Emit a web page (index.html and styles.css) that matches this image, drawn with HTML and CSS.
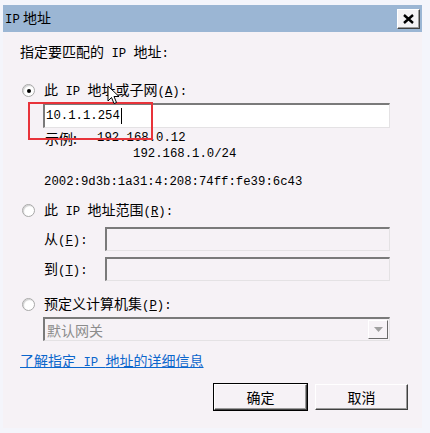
FILE: index.html
```html
<!DOCTYPE html>
<html lang="zh-CN">
<head>
  <meta charset="UTF-8">
  <title>IP 地址</title>
  <link rel="stylesheet" href="styles.css">
</head>
<body>
  <div class="window">
    <div class="titlebar">
      <span class="title"><span class="en">IP</span> 地址</span>
      <button class="close" aria-label="关闭">
        <svg width="11" height="10" viewBox="0 0 11 10"><path d="M1 1 L10 9 M10 1 L1 9" stroke="#000" stroke-width="2.4"/></svg>
      </button>
    </div>

    <div class="content">
      <div class="row heading"><span>指定要匹配的<span class="en"> IP </span>地址<span class="en">:</span></span></div>

      <div class="row option first">
        <span class="radio checked"></span>
        <span>此<span class="en"> IP </span>地址或子网<span class="en">(<u>A</u>):</span></span>
      </div>
      <div class="field-wrap">
        <div class="textbox">10.1.1.254<span class="caret"></span></div>
      </div>
      <div class="row example">
        <span class="ex-label">示例:</span>
        <span class="en">192.168.0.12</span>
      </div>
      <div class="row example second">
        <span class="en">192.168.1.0/24</span>
      </div>
      <div class="row ipv6">
        <span class="en">2002:9d3b:1a31:4:208:74ff:fe39:6c43</span>
      </div>

      <div class="row option range">
        <span class="radio"></span>
        <span>此<span class="en"> IP </span>地址范围<span class="en">(<u>R</u>):</span></span>
      </div>
      <div class="row pair from">
        <span class="pair-label">从<span class="en">(<u>F</u>):</span></span>
        <div class="textbox disabled"></div>
      </div>
      <div class="row pair to">
        <span class="pair-label">到<span class="en">(<u>T</u>):</span></span>
        <div class="textbox disabled"></div>
      </div>

      <div class="row option preset">
        <span class="radio"></span>
        <span>预定义计算机集<span class="en">(<u>P</u>):</span></span>
      </div>
      <div class="select">
        <span class="select-text">默认网关</span>
        <span class="select-btn"><svg width="9" height="5" viewBox="0 0 9 5"><path d="M0 0 H9 L4.5 5 Z" fill="#a0a0a0"/></svg></span>
      </div>

      <div class="row link-row">
        <a href="#" class="link">了解指定<span class="en"> IP </span>地址的详细信息</a>
      </div>

      <div class="buttons">
        <button class="btn default">确定</button>
        <button class="btn">取消</button>
      </div>
    </div>
  </div>

  <!-- 红框标注和鼠标指针 -->
  <div class="highlight"></div>
  <svg class="pointer" width="13" height="20" viewBox="0 0 13 20">
    <path d="M1 1 L1 16 L4.5 12.5 L7 18.5 L9.5 17.5 L7 11.5 L12 11.5 Z" fill="#fff" stroke="#000" stroke-width="1"/>
  </svg>
</body>
</html>
```

FILE: styles.css
```css
body {
  margin: 0;
  padding: 0;
  background-color: #f4f5fb;
  font-family: "Noto Sans CJK SC", sans-serif;
  font-size: 14px;
  color: #000;
  width: 430px;
  height: 433px;
  overflow: hidden;
  position: relative;
}

.en {
  font-family: "Liberation Mono", monospace;
  font-size: 12.3px;
}

.window {
  margin: 5px 0 0 3px;
  width: 419px;
  height: 423px;
  background-color: #f6f2f6;
}

.titlebar {
  height: 27px;
  background-color: #9bb6d4;
  display: flex;
  align-items: center;
  justify-content: space-between;
  padding-left: 2px;
  padding-right: 2px;
}

.title {
  line-height: 20px;
}

.close {
  width: 23px;
  height: 20px;
  padding: 0;
  background-color: #f4f2f4;
  border: 1px solid;
  border-color: #ffffff #404040 #404040 #ffffff;
  box-shadow: inset -1px -1px 0 #9a9a9a;
  display: flex;
  align-items: center;
  justify-content: center;
}

.content {
  padding-left: 17px;
}

.row {
  display: flex;
  align-items: center;
  line-height: 20px;
  height: 20px;
}

.heading {
  margin-top: 10px;
}

.option {
  margin-left: 2px;
}

.option.first {
  margin-top: 18px;
}

.radio {
  width: 11px;
  height: 11px;
  border-radius: 50%;
  background-color: #fff;
  border: 1px solid #a8a8a8;
  box-shadow: inset 1px 1px 1px #d0d0d0;
  margin-right: 9px;
  position: relative;
}

.radio.checked::after {
  content: "";
  position: absolute;
  left: 4px;
  top: 4px;
  width: 4px;
  height: 4px;
  border-radius: 50%;
  background-color: #000;
}

.field-wrap {
  margin-top: 3px;
  padding-left: 23px;
}

.textbox {
  height: 25px;
  width: 347px;
  box-sizing: border-box;
  background-color: #fff;
  border-top: 2px solid #7a7a7a;
  border-left: 2px solid #7a7a7a;
  border-right: 1px solid #e4e2e4;
  border-bottom: 1px solid #e4e2e4;
  font-family: "Liberation Mono", monospace;
  font-size: 12.3px;
  line-height: 21px;
  padding-left: 1px;
  display: flex;
  align-items: center;
}

.caret {
  display: inline-block;
  width: 1px;
  height: 16px;
  background-color: #000;
  margin-left: 1px;
}

.example {
  height: 16px;
  line-height: 16px;
  padding-left: 25px;
  margin-top: 2px;
}

.ex-label {
  width: 52px;
}

.example.second {
  padding-left: 113px;
  margin-top: 0;
}

.ipv6 {
  margin-top: 12px;
  height: 16px;
  padding-left: 24px;
}

.option.range {
  margin-top: 10px;
}

.pair {
  height: 24px;
  padding-left: 24px;
}

.pair.from {
  margin-top: 7px;
}

.pair.to {
  margin-top: 6px;
}

.pair-label {
  width: 61px;
}

.textbox.disabled {
  width: 285px;
  height: 24px;
  background-color: #f6f2f6;
}

.option.preset {
  margin-top: 13px;
}

.select {
  margin-top: 3px;
  margin-left: 23px;
  width: 347px;
  height: 24px;
  box-sizing: border-box;
  border-top: 2px solid #7a7a7a;
  border-left: 2px solid #7a7a7a;
  border-right: 1px solid #e4e2e4;
  border-bottom: 1px solid #e4e2e4;
  display: flex;
  align-items: center;
  justify-content: space-between;
}

.select-text {
  color: #8c8c8c;
  padding-left: 2px;
}

.select-btn {
  width: 20px;
  height: 19px;
  box-sizing: border-box;
  border: 1px solid;
  border-color: #ffffff #6a6a6a #6a6a6a #ffffff;
  display: flex;
  align-items: center;
  justify-content: center;
  margin-right: 1px;
}

.link-row {
  margin-top: 10px;
}

.link {
  color: #0b66cc;
  text-decoration: underline;
}

.buttons {
  display: flex;
  gap: 8px;
  margin-top: 13px;
  padding-left: 194px;
}

.btn {
  width: 93px;
  height: 26px;
  font-family: "Noto Sans CJK SC", sans-serif;
  font-size: 14px;
  background-color: #f6f2f6;
  border: 1px solid;
  border-color: #ffffff #404040 #404040 #ffffff;
  box-shadow: inset -1px -1px 0 #9a9a9a;
  padding: 0;
}

.btn.default {
  outline: 1px solid #000;
  outline-offset: 0;
  border-color: #ffffff #404040 #404040 #ffffff;
}

.highlight {
  position: absolute;
  left: 28px;
  top: 102px;
  width: 121px;
  height: 34px;
  border: 2px solid #e8333a;
}

.pointer {
  position: absolute;
  left: 107px;
  top: 85px;
}
```
